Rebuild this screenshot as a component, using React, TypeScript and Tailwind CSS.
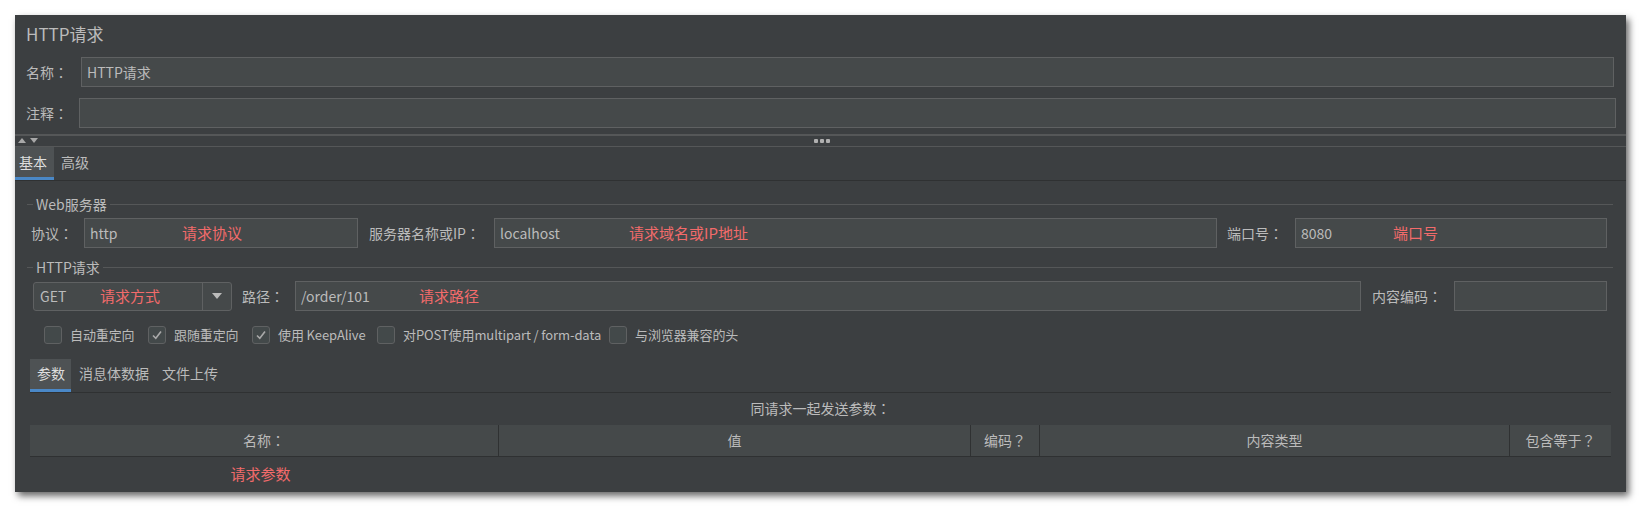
import React from "react";

type Kids = { children?: React.ReactNode; className?: string };

// full-width punctuation centred in its box, as in the reference
function P({ children }: Kids) {
  return <span className="font-['Noto_Sans_CJK_TC',sans-serif]">{children}</span>;
}

function Field({ className = "", children }: Kids) {
  return (
    <div
      className={`h-[30px] border border-[#5f6162] bg-[#45494a] flex items-center pl-[5px] text-[14px] text-[#bbbbbb] ${className}`}
    >
      {children}
    </div>
  );
}

function Note({ children }: Kids) {
  return <span className="text-[15px] font-normal text-[#f26b6b]">{children}</span>;
}

function GroupTitle({ children }: Kids) {
  return (
    <div className="mx-[12px] mr-[13px] h-[20px] flex items-center gap-[2px] text-[14px] text-[#bbbbbb]">
      <div className="w-[6px] h-px bg-[#555758]" />
      <span className="px-[1px]">{children}</span>
      <div className="flex-1 h-px bg-[#555758]" />
    </div>
  );
}

function Check({ checked, label, className = "" }: { checked?: boolean; label: string; className?: string }) {
  return (
    <div className={`flex items-center gap-[8px] ${className}`}>
      <div className="w-[18px] h-[18px] rounded-[3px] border border-[#5f6162] bg-[#43494a] flex items-center justify-center">
        {checked && (
          <svg width="12" height="12" viewBox="0 0 12 12">
            <path d="M2 6.5 L4.8 9.3 L10 2.5" fill="none" stroke="#a9a9a9" strokeWidth="1.6" />
          </svg>
        )}
      </div>
      <span className="text-[13px] text-[#bbbbbb] whitespace-nowrap tracking-[-0.1px]">{label}</span>
    </div>
  );
}

function Tab({ active, children, className = "" }: Kids & { active?: boolean }) {
  return (
    <div
      className={`h-[33px] flex items-center border-b-[3px] text-[14px] ${
        active ? "bg-[#4e5254] border-[#4a88c7] text-[#dddddd]" : "border-transparent text-[#bbbbbb]"
      } ${className}`}
    >
      {children}
    </div>
  );
}

export default function App() {
  return (
    <div className="w-[1641px] h-[507px] bg-white pl-[15px] pt-[15px] font-['Noto_Sans_CJK_SC','Noto_Sans',sans-serif]">
      <div className="w-[1611px] h-[477px] bg-[#3c3f41] shadow-[3px_4px_7px_rgba(0,0,0,0.6)] flex flex-col">
        {/* title */}
        <div className="h-[38px] flex items-center pl-[11px] text-[17px] text-[#bbbbbb]">HTTP请求</div>

        <div className="mt-[4px] flex items-center pl-[11px] pr-[12px]">
          <span className="w-[55px] text-[14px] text-[#bbbbbb]">名称<P>：</P></span>
          <Field className="flex-1">HTTP请求</Field>
        </div>
        <div className="mt-[11px] flex items-center pl-[11px] pr-[10px]">
          <span className="w-[53px] text-[14px] text-[#bbbbbb]">注释<P>：</P></span>
          <Field className="flex-1" />
        </div>

        {/* splitter */}
        <div className="mt-[6px] h-[2px] bg-[#555758]" />
        <div className="h-[10px] relative">
          <div className="absolute left-[3px] top-[2px] flex gap-[4px]">
            <svg width="8" height="5" viewBox="0 0 8 5">
              <path d="M0 5 L4 0 L8 5 Z" fill="#a8a8a8" />
            </svg>
            <svg width="8" height="5" viewBox="0 0 8 5">
              <path d="M0 0 L8 0 L4 5 Z" fill="#a8a8a8" />
            </svg>
          </div>
          <div className="absolute left-[799px] top-[3px] flex gap-[2px]">
            <div className="w-[4px] h-[4px] rounded-[1px] bg-[#b0b0b0]" />
            <div className="w-[4px] h-[4px] rounded-[1px] bg-[#b0b0b0]" />
            <div className="w-[4px] h-[4px] rounded-[1px] bg-[#b0b0b0]" />
          </div>
        </div>
        <div className="h-px bg-[#555758]" />

        {/* outer tabs */}
        <div className="flex border-b border-[#2f3132]">
          <Tab active className="w-[39px] pl-[4px] -mb-px">基本</Tab>
          <Tab className="pl-[7px]">高级</Tab>
        </div>

        {/* web server */}
        <div className="mt-[13px]">
          <GroupTitle>Web服务器</GroupTitle>
        </div>
        <div className="mt-[4px] flex items-center pl-[16px] pr-[19px] text-[14px] text-[#bbbbbb]">
          <span className="w-[53px]">协议<P>：</P></span>
          <Field className="w-[274px]">
            <span className="w-[92px]">http</span>
            <Note>请求协议</Note>
          </Field>
          <span className="w-[125px] ml-[11px]">服务器名称或IP<P>：</P></span>
          <Field className="flex-1">
            <span className="w-[129px]">localhost</span>
            <Note>请求域名或IP地址</Note>
          </Field>
          <span className="w-[68px] ml-[10px]">端口号<P>：</P></span>
          <Field className="w-[312px]">
            <span className="w-[92px]">8080</span>
            <Note>端口号</Note>
          </Field>
        </div>

        {/* http request */}
        <div className="mt-[9px]">
          <GroupTitle>HTTP请求</GroupTitle>
        </div>
        <div className="mt-[4px] flex items-center pl-[18px] pr-[19px] text-[14px] text-[#bbbbbb]">
          <div className="w-[199px] h-[29px] rounded-[3px] border border-[#5f6162] bg-[#45494a] flex items-center">
            <div className="flex-1 flex items-center pl-[6px]">
              <span className="w-[60px]">GET</span>
              <Note>请求方式</Note>
            </div>
            <div className="w-[29px] h-full border-l border-[#5f6162] flex items-center justify-center">
              <svg width="10" height="6" viewBox="0 0 10 6">
                <path d="M0 0 L10 0 L5 6 Z" fill="#bbbbbb" />
              </svg>
            </div>
          </div>
          <span className="w-[53px] ml-[10px]">路径<P>：</P></span>
          <Field className="w-[1066px] h-[29px]">
            <span className="w-[118px]">/order/101</span>
            <Note>请求路径</Note>
          </Field>
          <span className="w-[82px] ml-[11px]">内容编码<P>：</P></span>
          <Field className="flex-1 h-[29px]" />
        </div>

        {/* checkboxes */}
        <div className="mt-[14px] flex items-center pl-[29px]">
          <Check className="w-[104px]" label="自动重定向" />
          <Check className="w-[104px]" checked label="跟随重定向" />
          <Check className="w-[125px]" checked label="使用 KeepAlive" />
          <Check className="w-[232px]" label="对POST使用multipart / form-data" />
          <Check label="与浏览器兼容的头" />
        </div>

        {/* inner tabs */}
        <div className="mt-[14px] mx-[15px] flex border-b border-[#2f3132]">
          <Tab active className="w-[41px] pl-[7px] -mb-px">参数</Tab>
          <Tab className="pl-[8px]">消息体数据</Tab>
          <Tab className="pl-[13px]">文件上传</Tab>
        </div>

        <div className="mx-[15px] h-[32px] flex items-center justify-center text-[14px] text-[#bbbbbb]">
          同请求一起发送参数<P>：</P>
        </div>

        <div className="mx-[15px] grid grid-cols-[469px_472px_69px_470px_101px] h-[32px] bg-[#45494a] border-b border-[#2f3132] text-[14px] text-[#bbbbbb]">
          <div className="flex items-center justify-center border-r border-[#2f3132]">名称<P>：</P></div>
          <div className="flex items-center justify-center border-r border-[#2f3132]">值</div>
          <div className="flex items-center justify-center border-r border-[#2f3132]">编码<P>？</P></div>
          <div className="flex items-center justify-center border-r border-[#2f3132]">内容类型</div>
          <div className="flex items-center justify-center">包含等于<P>？</P></div>
        </div>
        <div className="mx-[15px] flex-1 grid grid-cols-[469px_1fr]">
          <div className="flex items-center justify-center pr-[8px]">
            <Note>请求参数</Note>
          </div>
        </div>
      </div>
    </div>
  );
}
